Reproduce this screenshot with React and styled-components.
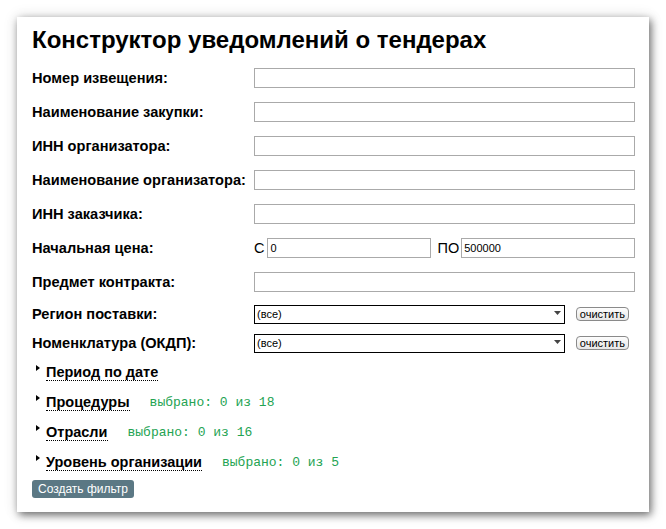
import { createGlobalStyle, styled } from "styled-components";

const Global = createGlobalStyle`
  html, body {
    margin: 0;
    padding: 0;
    background: #fff;
  }
  body {
    font-family: "Liberation Sans", Arial, sans-serif;
    color: #000;
  }
`

const Page = styled.div`
  width: 666px;
  height: 529px;
  padding: 17px 0 0 17px;
  box-sizing: border-box;
`
const Card = styled.div`
  width: 632px;
  height: 495px;
  box-sizing: border-box;
  background: #fff;
  padding: 6px 14px 0 15px;
  box-shadow: 2px 3px 8px rgba(0, 0, 0, 0.55), 0 0 14px rgba(0, 0, 0, 0.12);
`
const Title = styled.h1`
  margin: 0 0 4px;
  font-size: 24px;
  line-height: 34px;
  font-weight: bold;
`
const Row = styled.div`
  display: grid;
  grid-template-columns: 222px 1fr;
  align-items: center;
  height: ${(p) => p.$h || 34}px;
`
const Label = styled.div`
  font-size: 14.6px;
  font-weight: bold;
`
const Field = styled.input`
  width: ${(p) => (p.$w ? `${p.$w}px` : "100%")};
  flex: ${(p) => (p.$w ? "none" : "1")};
  min-width: 0;
  height: 20px;
  box-sizing: border-box;
  border: 1px solid #aaa;
  padding: 0 2px;
  font: 11px "Liberation Sans", Arial, sans-serif;
  outline: none;
`
const Range = styled.div`
  display: flex;
  align-items: center;
  font-size: 14.5px;
`
const RangeWord = styled.span`
  margin: 0 ${(p) => p.$right}px 0 ${(p) => p.$left}px;
`
const Controls = styled.div`
  display: flex;
  align-items: center;
  justify-content: space-between;
`
const SelectBox = styled.div`
  position: relative;
  width: 311px;
  height: 19px;
`
const Select = styled.select`
  appearance: none;
  width: 100%;
  height: 100%;
  box-sizing: border-box;
  border: 1px solid #000;
  border-radius: 0;
  background: #fff;
  padding: 0 2px;
  font: 11px "Liberation Sans", Arial, sans-serif;
  color: #000;
  outline: none;
`
const Arrow = styled.svg`
  position: absolute;
  right: 4px;
  top: 7px;
  pointer-events: none;
`
const ClearButton = styled.button`
  height: 14px;
  padding: 0 3px;
  margin-right: 6px;
  border: 1px solid #8a8a8a;
  border-radius: 4px;
  background: linear-gradient(#fdfdfd, #e6e6e6);
  font: 11px "Liberation Sans", Arial, sans-serif;
  line-height: 12px;
  color: #000;
`
const Toggle = styled.div`
  display: flex;
  align-items: center;
  height: 30px;
  padding-left: 4px;
`
const Caret = styled.span`
  width: 0;
  height: 0;
  border-top: 3px solid transparent;
  border-bottom: 3px solid transparent;
  border-left: 4px solid #000;
  margin: -8px 6px 0 0;
`
const ToggleLink = styled.span`
  font-size: 14.5px;
  font-weight: bold;
  border-bottom: 1px dotted #000;
  line-height: 16px;
`
const Counter = styled.span`
  margin-left: 20px;
  font: 13px "Liberation Mono", "Courier New", monospace;
  color: #23a352;
`
const Submit = styled.button`
  margin-top: 3px;
  height: 18px;
  padding: 0 6px;
  border: none;
  border-radius: 3px;
  background: #5b7884;
  color: #fff;
  font: 12px "Liberation Sans", Arial, sans-serif;
`

const textFields = [
  "Номер извещения:",
  "Наименование закупки:",
  "ИНН организатора:",
  "Наименование организатора:",
  "ИНН заказчика:",
];

const sections = [
  { name: "Период по дате" },
  { name: "Процедуры", total: 18 },
  { name: "Отрасли", total: 16 },
  { name: "Уровень организации", total: 5 },
];

function Dropdown() {
  return (
    <Controls>
      <SelectBox>
        <Select defaultValue="all">
          <option value="all">(все)</option>
        </Select>
        <Arrow width="7" height="4" viewBox="0 0 7 4">
          <path d="M0 0H7L3.5 4Z" fill="#444" />
        </Arrow>
      </SelectBox>
      <ClearButton>очистить</ClearButton>
    </Controls>
  );
}

export default function App() {
  return (
    <Page>
      <Global />
      <Card>
        <Title>Конструктор уведомлений о тендерах</Title>
        {textFields.map((label) => (
          <Row key={label}>
            <Label>{label}</Label>
            <Field />
          </Row>
        ))}
        <Row>
          <Label>Начальная цена:</Label>
          <Range>
            <RangeWord $left={0} $right={3}>С</RangeWord>
            <Field defaultValue="0" $w={164} />
            <RangeWord $left={6} $right={2}>ПО</RangeWord>
            <Field defaultValue="500000" />
          </Range>
        </Row>
        <Row>
          <Label>Предмет контракта:</Label>
          <Field />
        </Row>
        <Row $h={29}>
          <Label>Регион поставки:</Label>
          <Dropdown />
        </Row>
        <Row $h={29}>
          <Label>Номенклатура (ОКДП):</Label>
          <Dropdown />
        </Row>
        {sections.map((s) => (
          <Toggle key={s.name}>
            <Caret />
            <ToggleLink>{s.name}</ToggleLink>
            {s.total && <Counter>выбрано: 0 из {s.total}</Counter>}
          </Toggle>
        ))}
        <Submit>Создать фильтр</Submit>
      </Card>
    </Page>
  );
}
